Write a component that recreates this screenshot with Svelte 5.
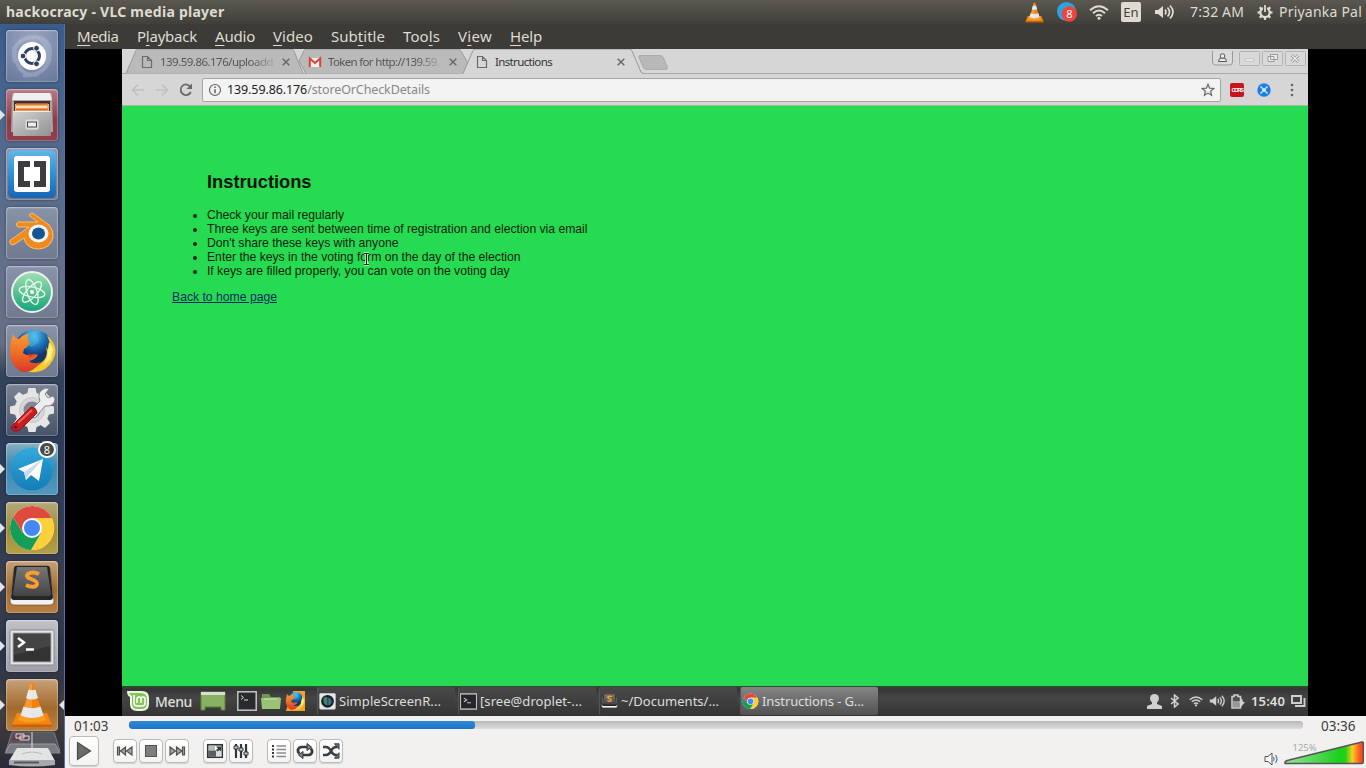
<script>
  // Spreads the letters of a label so that it fills the given width.
  function fit(node, width) {
    const natural = node.getBoundingClientRect().width;
    const count = node.textContent.length;
    if (natural && count) node.style.letterSpacing = `${(width - natural) / count}px`;
  }

  const menus = [
    { a: '', key: 'M', b: 'edia', w: 41.5, cell: 60 },
    { a: 'P', key: 'l', b: 'ayback', w: 60, cell: 78 },
    { a: '', key: 'A', b: 'udio', w: 40, cell: 58 },
    { a: '', key: 'V', b: 'ideo', w: 40, cell: 58 },
    { a: 'Sub', key: 't', b: 'itle', w: 54, cell: 72 },
    { a: 'Too', key: 'l', b: 's', w: 37, cell: 55 },
    { a: 'V', key: 'i', b: 'ew', w: 34, cell: 52 },
    { a: '', key: 'H', b: 'elp', w: 32, cell: 50 }
  ];

  const launchers = [
    { id: 'dash', tone: 'slate' },
    { id: 'files', tone: 'red', running: true },
    { id: 'brackets', tone: 'grey' },
    { id: 'blender', tone: 'grey' },
    { id: 'atom', tone: 'grey' },
    { id: 'firefox', tone: 'grey' },
    { id: 'settings', tone: 'dark' },
    { id: 'telegram', tone: 'blue', running: true },
    { id: 'chrome', tone: 'gold', running: true },
    { id: 'sublime', tone: 'brown', running: true },
    { id: 'terminal', tone: 'silver', running: true },
    { id: 'vlc', tone: 'brown', running: true, focused: true }
  ];

  const steps = [
    { text: 'Check your mail regularly', w: 137 },
    { text: 'Three keys are sent between time of registration and election via email', w: 380.5 },
    { text: "Don't share these keys with anyone", w: 191.5 },
    { text: 'Enter the keys in the voting form on the day of the election', w: 313.5 },
    { text: 'If keys are filled properly, you can vote on the voting day', w: 302.5 }
  ];

  const tasks = [
    { id: 'recorder', text: 'SimpleScreenR...', w: 102 },
    { id: 'terminal', text: '[sree@droplet-...', w: 102 },
    { id: 'sublime', text: '~/Documents/...', w: 98 },
    { id: 'chrome', text: 'Instructions - G...', w: 102, active: true }
  ];

  const progress = { played: 346, total: 1174 };
  const teeth = [0, 45, 90, 135, 180, 225, 270, 315];
</script>

{#snippet cone()}
  <path d="M11 34h30l5 12H6z" fill="#f5860d" />
  <path d="M6 45.500h40V48H6z" fill="#cf5f04" />
  <path d="M14.500 35.500q11.500 4 23 0l2.500 5.500q-14 5-28 0z" fill="#fb9c22" />
  <path d="M24.300 4.500q1.700-1 3.400 0L31.500 19 37.500 36.500q-11.500 5-23 0L20.500 19z" fill="#f5800c" />
  <path d="M22.600 10.500q3.400 1.500 6.800 0L32 19q-6 3-12 0z" fill="#e4e8ea" />
  <path d="M17.500 27.500q8.500 3.500 17 0l3 9q-11.500 5-23 0z" fill="#e4e8ea" />
  <path d="M24 5h2v33.500q-5 0-9-1.200z" fill="#fff" opacity=".2" />
{/snippet}

{#snippet chrome()}
  <circle cx="26" cy="26" r="22" fill="#fff" />
  <path d="M26 26L7 15A22 22 0 0 1 45.700 16H26z" fill="#de4b3e" />
  <path d="M26 16H45.700A22 22 0 0 1 25 48L35 31z" fill="#ffcf3b" />
  <path d="M7 15A22 22 0 0 0 25 48L35 31 17 31z" fill="#169d58" />
  <path d="M7 15L17 31 26 26 26 16z" fill="#de4b3e" />
  <circle cx="26" cy="26" r="10" fill="#f5f7fa" />
  <circle cx="26" cy="26" r="8" fill="#4688f1" />
{/snippet}

{#snippet firefox()}
  <circle cx="28" cy="25" r="20" fill="url(#globe)" />
  <path d="M20 8q8-5 16-1-6 0-7 5 6 0 3 6l-7 4-8-6z" fill="#55b7e4" opacity=".45" />
  <path d="M41 10Q54 22 47 35 39 49 25 47 14 45 20 41 29 44 36 37 43 31 40 22l4 5q1-9-3-17z" fill="#f7c92f" />
  <path d="M43 17l4 7-2 10-7 6 3-8z" fill="#fff17f" />
  <path d="M7 9q1 4 6 5 4-5 10-5-2 3-1 6l2 3q-2 4-6 6l-1 4q5 4 11 1l4 1q-3 5-9 6 4 4 12 1-8 11-19 10Q3 40 4 25q0-7 3-16z" fill="url(#fox)" />
  <path d="M22 28q4 2 8 1-3 4-8 3z" fill="#c93d2d" opacity=".6" />
{/snippet}

{#snippet terminal()}
  <rect x="4" y="10" width="44" height="35" rx="1" fill="#e5e5e5" stroke="#888" />
  <rect x="7" y="13" width="38" height="29" fill="#333" stroke="#aaa" />
  <path d="M8 14h36v12L8 35z" fill="#555" opacity=".5" />
  <path d="M12 18l6 4.500-6 4.500M20 29.500h8" fill="none" stroke="#fff" stroke-width="2.500" />
{/snippet}

{#snippet sublime()}
  <path d="M8 8q0-3 3-3h30q3 0 3 3l4 32q0 4-4 4H8q-4 0-4-4z" fill="#f1f1f1" stroke="#6c5136" stroke-width=".7" />
  <path d="M10 5h32q2 0 2 3l3 28q0 3-3 3H8q-3 0-3-3L8 8q0-3 2-3z" fill="#252627" />
  <path d="M11 6h30l4 27q0 2-3 2H10q-3 0-3-2z" fill="url(#key)" />
  <path d="M33 13q-7-3-11 0c-5 5 10 5 9 10-1 4-7 3-11 1" fill="none" stroke="#ff9d2e" stroke-width="4" />
{/snippet}

{#snippet art(id)}
  {#if id === 'dash'}
    <g fill="none" stroke="#d3daea" opacity=".28" stroke-width="4">
      <path d="M26 7Q48 7 43 29M9 32Q4 10 26 7M44 28Q38 47 17 45" />
      <path d="M8 17q2 32 24 27M33 7Q46 20 39 35" />
    </g>
    <circle cx="26" cy="26" r="14" fill="#fff" />
    <circle cx="26" cy="26" r="7.500" fill="none" stroke="#30405f" stroke-width="3" />
    <g fill="#30405f" stroke="#fff" stroke-width="1">
      <circle cx="17" cy="26" r="2.900" /><circle cx="30.500" cy="18.200" r="2.900" /><circle cx="30.500" cy="33.800" r="2.900" />
    </g>
  {:else if id === 'files'}
    <path d="M8 4h36q2 0 2 3l1 36H5L6 7q0-3 2-3z" fill="#a9a9a9" />
    <path d="M8 4h36l2 7H6z" fill="#efefef" />
    <rect x="8" y="12" width="36" height="13" fill="#3e342f" />
    <path d="M9 15h34v9H9z" fill="#f3b064" />
    <path d="M10 15h32M10 20.500h32" stroke="#d86a34" stroke-width="1.500" />
    <path d="M10 18h31" stroke="#fff2d0" stroke-width="1.500" />
    <rect x="7" y="22" width="38" height="25" rx="1" fill="url(#steel)" />
    <path d="M7.500 22.500h37" stroke="#ececec" />
    <rect x="19.500" y="30.500" width="13" height="10" rx="2" fill="#ddd" stroke="#c9c9c9" />
    <rect x="21.500" y="33" width="9" height="5" fill="#eee" stroke="#444" />
  {:else if id === 'brackets'}
    <rect x="2" y="2" width="48" height="48" rx="5" fill="url(#azure)" />
    <rect x="8" y="8" width="36" height="36" rx="3" fill="#fff" />
    <path d="M12 13h12v6h-6v14h6v6H12zM40 13H28v6h6v14h-6v6h12z" fill="#3b3d40" />
  {:else if id === 'blender'}
    <path d="M24 7q2-2 4 0l15 11q5 5 4 12-2 11-14 12-13 0-15-11l-9 6q-4 2-5-1-1-3 2-4l17-12H12q-3-1-1-4 1-2 4-1h17l-7-5q-3-1-1-3z" fill="#f18a1c" stroke="#fbbf73" stroke-width="1" />
    <ellipse cx="32.500" cy="26.500" rx="10" ry="9" fill="#f5f6f7" />
    <ellipse cx="32.500" cy="26.500" rx="6.500" ry="6" fill="#155590" />
  {:else if id === 'atom'}
    <circle cx="26" cy="26" r="20" fill="url(#mint)" stroke="#e9f2eb" stroke-width="2" />
    <g fill="none" stroke="#e1fae7" stroke-width="1.400">
      <ellipse cx="26" cy="26" rx="5" ry="13" transform="rotate(-18 26 26)" />
      <ellipse cx="26" cy="26" rx="5" ry="13" transform="rotate(42 26 26)" />
      <ellipse cx="26" cy="26" rx="5" ry="13" transform="rotate(102 26 26)" />
    </g>
    <circle cx="26" cy="26" r="2" fill="#fff" />
  {:else if id === 'firefox'}
    {@render firefox()}
  {:else if id === 'settings'}
    <g fill="#e5e5e3">
      {#each teeth as angle}
        <path d="M22.500 4h7l2 9H20.500z" transform={`rotate(${angle} 26 26)`} />
      {/each}
      <circle cx="26" cy="26" r="17.500" />
    </g>
    <circle cx="26" cy="26" r="12.500" fill="#d5d6d7" stroke="#c5c5c5" />
    <circle cx="26" cy="26" r="8.500" fill="#828791" />
    <path d="M23 28L34 17q-4-10 6-13l3 1-4 5 3 4 5-2 2 3q-1 8-10 7L29 34z" fill="#eee" stroke="#85888c" />
    <path d="M7 41L25 23q5 0 6 6L14 46q-6 3-9-2z" fill="#c51d20" stroke="#8e1317" />
    <path d="M12 39l14-13" stroke="#f1615a" stroke-width="2" />
    <circle cx="9.500" cy="43" r="1.600" fill="#6b1114" />
  {:else if id === 'telegram'}
    <circle cx="26" cy="26" r="21.500" fill="url(#sky)" />
    <path d="M38 16l7 7v12L30 46 22 36z" fill="#1586bd" opacity=".3" />
    <path d="M12 26L37 16 33 38 25 32 20 37 18 29z" fill="#fff" />
    <path d="M18 29l19-13-14 16-3 5z" fill="#c8dce9" />
  {:else if id === 'chrome'}
    {@render chrome()}
  {:else if id === 'sublime'}
    {@render sublime()}
  {:else if id === 'terminal'}
    {@render terminal()}
  {:else if id === 'recorder'}
    <rect x="3" y="3" width="46" height="46" rx="4" fill="#e5e8e7" />
    <circle cx="26" cy="26" r="18" fill="#182326" />
    <path d="M15 16q9-5 11 0v22q-14-2-11-22z" fill="#43866a" />
    <path d="M28 15q12 3 9 17-5 6-9 5z" fill="#466b91" />
  {:else if id === 'console'}
    <rect x="3" y="5" width="46" height="43" fill="#24262b" stroke="#bdbdbd" stroke-width="4" />
    <path d="M13 17l8 5-8 5M22 30h11" fill="none" stroke="#ccc" stroke-width="3" />
  {:else}
    {@render cone()}
  {/if}
{/snippet}

{#snippet page()}
  <svg class="tab-icon" viewBox="0 0 14 14"><path d="M2.500 1.500h5l4 4v7h-9zM7.500 1.500v4h4" fill="none" stroke="#6a6a6a" stroke-width="1.200" /></svg>
{/snippet}

{#snippet waves(color)}
  <path d="M1 6h3l5-4v12l-5-4H1z" fill={color} />
  <path d="M11 5.500q2 2.500 0 5M13.500 3.500q4 4.500 0 9M16 1.500q6 6.500 0 13" fill="none" stroke={color} stroke-width="1.700" />
{/snippet}

{#snippet wifi(color)}
  <g fill="none" stroke={color} stroke-width="2">
    <path d="M1 6.200q9-8 18 0M4 9.200q6-5.500 12 0M7 12q3-2.500 6 0" />
  </g>
  <circle cx="10" cy="14.300" r="1.500" fill={color} />
{/snippet}

<svg class="defs" width="0" height="0" aria-hidden="true">
  <defs>
    <radialGradient id="globe" cx=".5" cy=".15"><stop stop-color="#55c7f1" /><stop offset=".6" stop-color="#176eb2" /><stop offset="1" stop-color="#15366d" /></radialGradient>
    <linearGradient id="fox" x2="0" y2="1"><stop stop-color="#f79b35" /><stop offset=".5" stop-color="#ee6e26" /><stop offset="1" stop-color="#d9382b" /></linearGradient>
    <linearGradient id="key" x2="0" y2="1"><stop stop-color="#777" /><stop offset="1" stop-color="#424344" /></linearGradient>
    <linearGradient id="steel" x2="1" y2="1"><stop stop-color="#d3d3d3" /><stop offset="1" stop-color="#919191" /></linearGradient>
    <linearGradient id="azure" x2="0" y2="1"><stop stop-color="#67b5e4" /><stop offset=".45" stop-color="#3195d9" /><stop offset="1" stop-color="#1864b5" /></linearGradient>
    <linearGradient id="mint" x2="0" y2="1"><stop stop-color="#a4dfb0" /><stop offset="1" stop-color="#14a37b" /></linearGradient>
    <linearGradient id="sky" x2="0" y2="1"><stop stop-color="#35a9df" /><stop offset="1" stop-color="#147eb5" /></linearGradient>
    <linearGradient id="loud"><stop stop-color="#9be09b" /><stop offset=".7" stop-color="#19d019" /><stop offset=".77" stop-color="#27ce16" /><stop offset=".86" stop-color="#f1d020" /><stop offset=".95" stop-color="#ff5b23" /><stop offset="1" stop-color="#ff3a23" /></linearGradient>
  </defs>
</svg>

<div class="desktop">
  <header class="panel">
    <b class="title" use:fit={218.5}>hackocracy - VLC media player</b>
    <div class="indicators">
      <svg class="i-cone" viewBox="5 3 42 46">{@render cone()}</svg>
      <svg class="i-tg" viewBox="0 0 20 20"><circle cx="9.500" cy="9.500" r="9.500" fill="#2ca5df" /><circle cx="12.300" cy="12" r="7.700" fill="#ef443d" /><text x="12.300" y="16" text-anchor="middle" font-size="11" fill="#fff">8</text></svg>
      <svg class="i-wifi" viewBox="0 0 20 16">{@render wifi('#dfdbd2')}</svg>
      <span class="lang">En</span>
      <svg class="i-sound" viewBox="0 0 20 16">{@render waves('#dfdbd2')}</svg>
      <span class="clock"><span use:fit={54}>7:32 AM</span></span>
      <svg class="i-gear" viewBox="0 0 18 18">
        <g stroke="#dfdbd2" fill="none">
          {#each teeth as angle}<path d="M9 .6v3" stroke-width="2.600" transform={`rotate(${angle} 9 9)`} />{/each}
          <circle cx="9" cy="9" r="5.200" stroke-width="2.400" />
        </g>
        <path d="M6.800 0h4.400v7.500H6.800z" fill="#4c4a44" /><path d="M8 .5h2v8H8z" fill="#dfdbd2" />
      </svg>
      <span class="user"><span use:fit={83}>Priyanka Pal</span></span>
    </div>
  </header>

  <div class="body">
    <nav class="launcher">
      {#each launchers as app}
        <div class="slot">
          <div class={`tile ${app.tone}`}><svg viewBox="0 0 52 52">{@render art(app.id)}</svg></div>
          {#if app.running}<i class="run"></i>{/if}
          {#if app.focused}<i class="focus"></i>{/if}
          {#if app.id === 'telegram'}<span class="badge">8</span>{/if}
        </div>
      {/each}
      <svg class="stack" viewBox="0 0 65 37">
        <path d="M12 1h42l6 19H6z" fill="#676a73" opacity=".65" stroke="#9a9ca2" />
        <path d="M14 3h15l-2 7H11z" fill="#69434b" />
        <path d="M16 3h8v4h-8zM20 5h9v4h-9z" fill="none" stroke="#e1dcdd" />
        <path d="M10 13h45l5 9H5z" fill="#888b91" opacity=".7" stroke="#b6b7ba" />
        <path d="M17 17h31l7 13H9z" fill="#e2e4e4" />
        <path d="M9 29h46v5q-23 3-46 0z" fill="#a7a9aa" />
        <path d="M14 31.500h25" stroke="#555" stroke-width="2" /><path d="M32 1v17" stroke="#ddd" />
        <path d="M22 23q10-4 20 0" fill="none" stroke="#bbb" />
      </svg>
    </nav>

    <main>
      <div class="menubar">
        {#each menus as m}
          <div class="menu" style:width={`${m.cell}px`}><span use:fit={m.w}>{m.a}<u>{m.key}</u>{m.b}</span></div>
        {/each}
      </div>

      <div class="video">
        <div class="screen">
          <div class="tabs">
            <svg class="shapes" viewBox="0 0 1186 25">
              <path d="M0 24.500H1186" stroke="#aaa" />
              <path d="M4 24.500L14 1.500Q15 0 17 0H169Q171 0 172 2L181 24.500" fill="#bababa" stroke="#999" />
              <path d="M184 24.500L177 12 182 1.500Q183 0 185 0H336Q338 0 339 2L348 18 345 24.500" fill="#bababa" stroke="#999" />
              <path d="M341 25L351 1.500Q352 0 354 0H507Q509 0 510 2L519 23Q520 24.500 522 24.500V26H341z" fill="#d6d6d6" />
              <path d="M341 24.500L351 1.500Q352 0 354 0H507Q509 0 510 2L519 23Q520 24.500 522 24.500" fill="none" stroke="#999" />
              <path d="M518 6.500H538Q540 6.500 541 8L545.500 18Q546 20.500 543 20.500H525Q522 20.500 521 18L517 8.500Q516 6.500 518 6.500z" fill="#b8b8b8" stroke="#acacac" />
            </svg>
            <div class="tab first">{@render page()}<span class="label fade" use:fit={113}>139.59.86.176/uploadd</span><svg class="close" viewBox="0 0 8 8"><path d="M.7.7l6.600 6.600M7.300.7L.7 7.300" /></svg></div>
            <div class="tab second"><svg class="tab-icon" viewBox="0 0 14 14"><path d="M1 3h12v9H1z" fill="#eee" /><path d="M1.800 12V3.500L7 8l5.200-4.500V12" fill="none" stroke="#d8453a" stroke-width="2" /></svg><span class="label fade" use:fit={111}>Token for http://139.59.</span><svg class="close" viewBox="0 0 8 8"><path d="M.7.7l6.600 6.600M7.300.7L.7 7.300" /></svg></div>
            <div class="tab third">{@render page()}<span class="label" use:fit={57}>Instructions</span><svg class="close" viewBox="0 0 8 8"><path d="M.7.7l6.600 6.600M7.300.7L.7 7.300" /></svg></div>
            <div class="frame">
              <svg class="person" viewBox="0 0 21 15"><path d="M.5 0v11q0 3 3 3h14q3 0 3-3V0" fill="#dadada" stroke="#999" /><path d="M6.500 10.500q0-3.500 3-3.500h2q3 0 3 3.500z" fill="#eee" stroke="#555" /><circle cx="10.500" cy="5" r="2.300" fill="#eee" stroke="#555" /></svg>
              <svg viewBox="0 0 21 15"><rect x=".5" y=".5" width="20" height="14" rx="1" fill="#d9d9d9" stroke="#b3b3b3" /><path d="M6 8h9v2H6z" fill="#fff" stroke="#aaa" stroke-width=".6" /></svg>
              <svg viewBox="0 0 21 15"><rect x=".5" y=".5" width="20" height="14" rx="1" fill="#d9d9d9" stroke="#b3b3b3" /><path d="M8.500 3.500h7v5h-7zM6 5.500h6v5H6z" fill="#eee" stroke="#999" /></svg>
              <svg viewBox="0 0 21 15"><rect x=".5" y=".5" width="20" height="14" rx="1" fill="#d9d9d9" stroke="#b3b3b3" /><path d="M6.500 4l7 7M13.500 4l-7 7" stroke="#999" stroke-width="3" /><path d="M6.500 4l7 7M13.500 4l-7 7" stroke="#eee" stroke-width="1.200" /></svg>
            </div>
          </div>

          <div class="toolbar">
            <svg class="nav" viewBox="0 0 80 32">
              <g fill="none" stroke="#c0c0c0" stroke-width="1.700"><path d="M22 16H11M16 10.500L10.500 16l5.500 5.500M34 16h11M40 10.500l5.500 5.500-5.500 5.500" /></g>
              <path d="M68.500 13a5.300 5.300 0 1 0 .3 5" fill="none" stroke="#686868" stroke-width="1.800" /><path d="M70 9.500v5.500h-5.500z" fill="#686868" />
            </svg>
            <div class="omnibox">
              <svg class="info" viewBox="0 0 14 14"><circle cx="7" cy="7" r="5.500" fill="none" stroke="#666" stroke-width="1.200" /><path d="M7 6.300v4M7 3.500v1.500" stroke="#555" stroke-width="1.400" /></svg>
              <span class="url" use:fit={203}><span class="host">139.59.86.176</span>/storeOrCheckDetails</span>
              <svg class="star" viewBox="0 0 14 14"><path d="M7 1.300l1.600 3.900 4.200.3-3.200 2.700 1 4.100L7 10.100l-3.600 2.200 1-4.100L1.200 5.500l4.200-.3z" fill="none" stroke="#686868" stroke-width="1.200" /></svg>
            </div>
            <span class="cors"><span use:fit={11}>CORS</span></span>
            <svg class="ext" viewBox="0 0 14 14"><circle cx="7" cy="7" r="6.700" fill="#1b7fe4" /><circle cx="7" cy="7" r="2.100" fill="#d9ebff" /><path d="M3.500 3.500l2 2M10.500 3.500l-2 2M3.500 10.500l2-2M10.500 10.500l-2-2" stroke="#d9ebff" stroke-width="1.400" /></svg>
            <svg class="dots" viewBox="0 0 4 14"><circle cx="2" cy="2" r="1.300" /><circle cx="2" cy="7" r="1.300" /><circle cx="2" cy="12" r="1.300" /></svg>
          </div>

          <section class="web">
            <h3><span use:fit={104.5}>Instructions</span></h3>
            <ul>
              {#each steps as s}<li><span use:fit={s.w}>{s.text}</span></li>{/each}
            </ul>
            <a href="#home"><span use:fit={105}>Back to home page</span></a>
            <svg class="caret" viewBox="0 0 7 14"><path d="M1 1.500h5M1 12.500h5M3.500 1.500v11" stroke="#d8f3dd" stroke-width="2.600" /><path d="M1 1.500h5M1 12.500h5M3.500 1.500v11" stroke="#17231a" /></svg>
          </section>

          <footer class="taskbar">
            <svg class="mint" viewBox="0 0 24 22"><path d="M1 1h15q7 0 7 7v6q0 7-7 7h-5Q4 21 4 14V7Q1 6 1 1z" fill="#eff4e9" /><path d="M3 3h12q6 0 6 6v4q0 6-6 6h-4q-5 0-5-6V6Q4 5 3 3z" fill="#86c25a" /><path d="M8 5v8q0 3 3 3h5q3 0 3-3V9q0-2-2-2t-2 2v4M15 9q0-2-2-2t-2 2v4" fill="none" stroke="#fff" stroke-width="1.500" /></svg>
            <span class="start"><span use:fit={37}>Menu</span></span>
            <svg class="show" viewBox="0 0 26 20"><path d="M1 1h24v18h-4v-3H5v3H1z" fill="#87b061" stroke="#5d7e43" /><path d="M1 1h24v3H1z" fill="#d9dfd4" /></svg>
            <svg class="quick term" viewBox="0 0 20 20"><rect x=".8" y=".8" width="18.400" height="18.400" fill="#292a2e" stroke="#c4c4c4" stroke-width="1.500" /><path d="M4 4.500l2.500 2L4 8.500M7 9h4" fill="none" stroke="#ddd" /></svg>
            <svg class="quick" viewBox="0 0 20 20"><path d="M1 3h7l2 3h9v4H1z" fill="#719850" /><path d="M0 7h20l-1 11H1z" fill="#9bc375" /><path d="M3 8h13" stroke="#cde2ba" /></svg>
            <svg class="quick" viewBox="2 2 48 48"><path d="M22 2h28v48H4z" fill="#f0a32a" />{@render firefox()}</svg>
            <div class="tasks">
              {#each tasks as t}
                <div class="task" class:active={t.active}><svg viewBox="2 3 48 47">{@render art(t.id === 'terminal' ? 'console' : t.id)}</svg><span use:fit={t.w}>{t.text}</span></div>
              {/each}
            </div>
            <div class="tray">
              <svg width="15" height="15" viewBox="0 0 15 15"><circle cx="7.500" cy="4.500" r="4.500" /><path d="M5 7h5v3l5 2v3H0v-3l5-2z" /></svg>
              <svg width="9" height="14" viewBox="0 0 9 14"><path d="M1 4l7 6-3.500 3V1L8 4l-7 6" fill="none" stroke="#d0d0d0" stroke-width="1.500" /></svg>
              <svg width="14" height="12" viewBox="0 0 20 16">{@render wifi('#d0d0d0')}</svg>
              <svg width="16" height="14" viewBox="0 0 20 16">{@render waves('#d0d0d0')}</svg>
              <svg width="14" height="15" viewBox="0 0 14 15"><path d="M1 2.500h2V1h4v1.500h2.500V14H1z" fill="#50524e" stroke="#d0d0d0" stroke-width="1.500" /><path d="M2 7h7v6H2z" fill="#999" /><path d="M11 4l-3 5h2v4l4-5h-2z" /></svg>
              <span class="time"><span use:fit={34}>15:40</span></span>
              <svg width="15" height="12" viewBox="0 0 15 12"><path d="M1 1h9v7H1zM13.500 3v8H4" fill="none" stroke="#d0d0d0" stroke-width="1.900" /></svg>
            </div>
          </footer>
        </div>
      </div>

      <div class="controls">
        <div class="seek">
          <span class="pos" use:fit={37}>01:03</span>
          <div class="track"><div class="played" style:width={`${progress.played / progress.total * 100}%`}></div></div>
          <span class="pos" use:fit={37}>03:36</span>
        </div>
        <div class="buttons">
          <div class="btn play"><svg width="16" height="20" viewBox="0 0 16 20"><path d="M1.500 1.500l13 8.500-13 8.500z" fill="#6a6c69" stroke="#4a4c49" stroke-width="1.200" /></svg></div>
          <div class="btn"><svg viewBox="0 0 18 18"><path d="M1.500 5h2v8h-2zM9.500 5v8L4.500 9zM16 5v8l-5.500-4z" fill="#a4a6a3" stroke="#50534f" stroke-width="1.200" /></svg></div>
          <div class="btn"><svg viewBox="0 0 18 18"><rect x="3.500" y="3.500" width="11" height="11" fill="#7c7f7b" stroke="#50534f" /></svg></div>
          <div class="btn"><svg viewBox="0 0 18 18"><path d="M2 5v8l5.500-4zM8.500 5v8l5.500-4zM14.500 5h2v8h-2z" fill="#a4a6a3" stroke="#50534f" stroke-width="1.200" /></svg></div>
          <div class="btn gap"><svg viewBox="0 0 18 18"><rect x="1.800" y="2.800" width="14.400" height="12.400" fill="#fff" stroke="#30373a" stroke-width="1.700" /><path d="M2.500 3.500h6.500v5H2.500z" fill="#b9bcbb" /><path d="M2.500 8.500h8v6h-8z" fill="#5a6062" /><path d="M10 8.500h5.500v6H10z" fill="#dcdcda" /><path d="M10 4.500h5v5l-1.500-1.500-2 1.500-1.500-1.500 2-1.500z" fill="#30373a" /></svg></div>
          <div class="btn"><svg viewBox="0 0 18 18"><path d="M4 2v14M9 2v14M14 2v14" stroke="#303639" stroke-width="2.200" /><path d="M2 4h4v3H2zM7 6h4v3H7zM12 10h4v3h-4z" fill="#ccc" stroke="#303639" /></svg></div>
          <div class="btn gap"><svg viewBox="0 0 18 18"><path d="M2 3h2v2H2zM2 6.500h2v2H2zM2 10h2v2H2zM2 13.500h2v2H2z" fill="#34383a" /><path d="M6.500 4H16M6.500 7.500H16M6.500 11H16M6.500 14.500H16" stroke="#8a8c8a" stroke-width="1.600" /></svg></div>
          <div class="btn"><svg viewBox="0 0 18 18"><path d="M3.500 11.500Q1.500 10 2 7.500 3 5 6 5h6M14.500 6.500q2 1.500 1.500 4-1 2.500-4 2.500H6" fill="none" stroke="#343a3c" stroke-width="2.700" /><path d="M11 1.500L15.500 5 11 8.500zM7 9.500L2.500 13 7 16.500z" fill="#7e817f" stroke="#343a3c" stroke-width="1" /></svg></div>
          <div class="btn"><svg viewBox="0 0 18 18"><path d="M1 5h3q3 0 5 4t5 4h1M1 13h3q3 0 5-4t5-4h1" fill="none" stroke="#3a4043" stroke-width="2.600" /><path d="M12.500 1.800h4.500v5.500zM12.500 16.200h4.500v-5.500z" fill="#6b706f" stroke="#3a4043" stroke-width="1" /></svg></div>
          <div class="volume">
            <svg class="speaker" width="16" height="14" viewBox="0 0 16 14"><path d="M1 4.500h3L8 1v12L4 9.500H1z" fill="#fff" stroke="#525452" /><path d="M9.500 5q1.500 2 0 4M11.500 3q3 4 0 8" fill="none" stroke="#3f78bc" stroke-width="1.200" /></svg>
            <svg class="wedge" viewBox="0 0 80 26"><path d="M1 23.500L1 22Q2 20.500 5 20L78 2Q79.300 1.700 79.300 3V22q0 1.500-2 1.500z" fill="url(#loud)" stroke="#555" stroke-width="1.400" /><text x="8.500" y="11" font-size="9.500" fill="#aaa">125%</text></svg>
          </div>
        </div>
      </div>
    </main>
  </div>
</div>

<style>
  :global(body) { margin: 0; overflow: hidden; background: #000; }
  .defs { position: absolute; }
  .desktop { width: 1366px; height: 768px; display: flex; flex-direction: column; font-family: "Noto Sans", "Open Sans", sans-serif; color: #dfdbd2; }
  .desktop svg { display: block; flex: none; }
  span, b { white-space: nowrap; }

  .panel { height: 24px; flex: none; display: flex; align-items: center; justify-content: space-between; padding: 0 4px 0 6px; background: linear-gradient(#5a5850, #403f3a); box-sizing: border-box; }
  .title { font-size: 14px; line-height: 22px; }
  .indicators { display: flex; align-items: center; height: 24px; font-size: 14px; }
  .i-cone { width: 19px; height: 21px; margin-right: 13px; }
  .i-tg { width: 20px; height: 20px; margin-right: 12px; }
  .i-wifi { width: 20px; height: 16px; margin-right: 12px; }
  .lang { width: 20px; height: 20px; box-sizing: border-box; border-radius: 2px; background: #dfdbd2; color: #45443e; font-size: 13px; line-height: 20px; text-align: center; margin-right: 13px; }
  .i-sound { width: 20px; height: 16px; margin-right: 16px; }
  .clock { width: 55px; margin: -1px 12px 0 0; }
  .i-gear { width: 16px; height: 17px; margin-right: 6px; }
  .user { width: 83px; margin-top: -1px; }

  .body { flex: 1; display: flex; min-height: 0; }
  .launcher { width: 65px; flex: none; box-sizing: border-box; padding-top: 6px; display: flex; flex-direction: column; gap: 7px; border-right: 1px solid #5275a0; background: linear-gradient(#3a5c8c, #50698d 15%, #65718a 34%, #656e82 43%, #35435b 47%, #2c3c59 55%, #303d54 68%, #3a3e4b 76%, #2b354a 85%, #433e3e 93%, #262b38); overflow: hidden; }
  .slot { position: relative; height: 52px; padding-left: 6px; flex: none; }
  .tile { width: 52px; height: 52px; border-radius: 4px; box-shadow: inset 0 0 0 1px #ffffff33, inset 0 1px 2px #ffffff55, 0 0 3px #0006; }
  .tile svg { width: 52px; height: 52px; }
  .slate { background: radial-gradient(circle at 50% 20%, #9ba6c0, #66779b); }
  .red { background: linear-gradient(#b97b86, #8c3b49 60%, #923e4d); }
  .grey { background: linear-gradient(#8993a9, #70798d); }
  .dark { background: linear-gradient(#7b8494, #465369); }
  .blue { background: linear-gradient(#86aec2, #4388b0 45%, #4f99c1); }
  .gold { background: linear-gradient(#b2a97c, #a18e34 55%, #b3a047); }
  .brown { background: linear-gradient(#c7a178, #a36a2e 55%, #ba8043); }
  .silver { background: linear-gradient(#bfc1c7, #9da0a8); }
  .run, .focus { position: absolute; top: 21px; border: 5px solid transparent; }
  .run { left: 0; border-left-color: #e1e4e8; border-right: 0; }
  .focus { right: 0; border-right-color: #e1e4e8; border-left: 0; }
  .badge { position: absolute; left: 38px; top: -2px; width: 18px; height: 17px; box-sizing: border-box; border: 2px solid #fff; border-radius: 9px; background: #484949; color: #fff; font-size: 11px; line-height: 13px; text-align: center; }
  .stack { width: 65px; height: 37px; margin-top: -7px; }

  main { flex: 1; display: flex; flex-direction: column; min-width: 0; }
  .menubar { height: 25px; flex: none; display: flex; padding-left: 12px; background: #3c3b37; font-size: 15px; line-height: 25px; }
  .menu { flex: none; }
  .menu u { text-decoration: underline; text-decoration-thickness: 1px; text-underline-offset: 3px; text-decoration-skip-ink: none; }

  .video { height: 667px; flex: none; display: flex; justify-content: center; padding: 0 58px 0 57px; box-sizing: border-box; background: #000; }
  .screen { width: 1186px; display: flex; flex-direction: column; }
  .tabs { position: relative; height: 25px; flex: none; display: flex; align-items: center; background: #d6d6d6; color: #555; font-size: 11.500px; }
  .shapes { position: absolute; left: 0; top: 0; width: 1186px; height: 25px; }
  .tab { position: relative; display: flex; align-items: center; box-sizing: border-box; height: 25px; }
  .tab .label { margin-left: 6px; color: #555; line-height: 17px; padding-bottom: 1px; }
  .tab .label.fade { -webkit-mask-image: linear-gradient(90deg, #000 80%, #0003); mask-image: linear-gradient(90deg, #000 80%, #0003); }
  .tab-icon { width: 14px; height: 14px; }
  .close { width: 8px; height: 8px; margin-left: auto; stroke: #666; stroke-width: 1.400; }
  .first { width: 168px; padding-left: 18px; }
  .second { width: 167px; padding-left: 18px; }
  .third { width: 168px; padding-left: 18px; }
  .third .label { color: #333; }
  .frame { position: relative; margin-left: auto; display: flex; gap: 2px; align-items: flex-start; padding: 0 2px 6px 0; }
  .frame svg { width: 21px; height: 15px; }
  .frame .person { margin-right: 4px; }

  .toolbar { height: 32px; flex: none; display: flex; align-items: center; background: #d6d6d6; border-bottom: 1px solid #a9b5a9; box-sizing: border-box; }
  .nav { width: 80px; height: 32px; }
  .omnibox { width: 1019px; height: 24px; box-sizing: border-box; border: 1px solid #a5a5a5; border-radius: 2px; background: #f3f3f3; display: flex; align-items: center; padding: 0 5px; color: #888; font-size: 12.500px; }
  .info { width: 14px; height: 14px; }
  .url { margin-left: 5px; }
  .host { color: #222; }
  .star { width: 14px; height: 14px; margin-left: auto; }
  .cors { margin-left: 9px; width: 14px; height: 14px; border-radius: 2px; background: #c4161c; color: #fff; font: bold 6px/14px "Liberation Sans", sans-serif; text-align: center; }
  .ext { width: 14px; height: 14px; margin-left: 13px; }
  .dots { width: 4px; height: 14px; margin-left: 19px; fill: #666; }

  .web { position: relative; flex: 1; background: #26da51; color: #07250d; font: 12.200px/14px "Liberation Sans", Arial, sans-serif; padding: 65px 0 0 50px; box-sizing: border-box; }
  h3 { margin: 0; padding-left: 35px; font-size: 18.300px; line-height: 22px; color: #031307; }
  ul { margin: 15px 0 12px; padding-left: 35px; }
  a { color: #092a66; text-decoration: underline; }
  .caret { position: absolute; left: 241px; top: 146px; width: 7px; height: 14px; }

  .taskbar { height: 30px; flex: none; display: flex; align-items: center; background: linear-gradient(#2a5136 0, #363636 3px, #454545 12px, #333); color: #dedede; font-size: 13px; padding: 0 2px 0 4px; box-sizing: border-box; overflow: hidden; }
  .mint { width: 24px; height: 22px; }
  .start { width: 37px; margin-left: 5px; font-weight: 500; font-size: 14px; }
  .show { width: 26px; height: 20px; margin-left: 8px; }
  .quick { width: 20px; height: 20px; margin-left: 4px; }
  .term { margin-left: 11px; }
  .tasks { display: flex; gap: 3px; margin-left: 12px; }
  .task { width: 138px; height: 28px; display: flex; align-items: center; gap: 3px; padding-left: 1px; box-sizing: border-box; border-left: 1px solid #555; border-radius: 2px; background: linear-gradient(#494949, #353535); }
  .task svg { width: 17px; height: 17px; }
  .task.active { background: linear-gradient(#858585, #515151); }
  .tray { display: flex; align-items: center; margin-left: auto; gap: 6px; fill: #d0d0d0; }
  .tray svg:nth-child(2) { margin-left: 2px; }
  .tray svg:nth-child(3) { margin-left: 4px; }
  .time { width: 34px; font-weight: 600; }

  .controls { flex: 1; background: #f2f1f0; color: #3c3c3c; display: flex; flex-direction: column; min-height: 0; }
  .seek { height: 20px; display: flex; align-items: center; padding: 0 8px 0 9px; font-size: 13.500px; line-height: 20px; justify-content: space-between; }
  .pos { width: 37px; }
  .track { width: 1174px; height: 8px; border-radius: 3px; background: linear-gradient(#b9b9b9, #dcdcdc); overflow: hidden; margin-bottom: 2px; }
  .played { height: 8px; border-radius: 3px; background: linear-gradient(#3387d6, #1d75cb); }
  .buttons { display: flex; align-items: center; height: 30px; gap: 2px; padding-left: 4px; }
  .btn { width: 24px; height: 24px; flex: none; display: flex; align-items: center; justify-content: center; box-sizing: border-box; border: 1px solid #bdbbb8; border-radius: 4px; background: linear-gradient(#fff, #f4f4f3); box-shadow: 0 1px 1px #0002; }
  .btn svg { width: 18px; height: 18px; }
  .btn.play { width: 30px; height: 30px; margin-right: 12px; }
  .btn.play svg { width: 16px; height: 20px; }
  .gap { margin-left: 12px; }
  .volume { margin-left: auto; display: flex; align-items: flex-end; gap: 4px; padding-right: 2px; align-self: flex-end; }
  .wedge { width: 80px; height: 26px; }
</style>
